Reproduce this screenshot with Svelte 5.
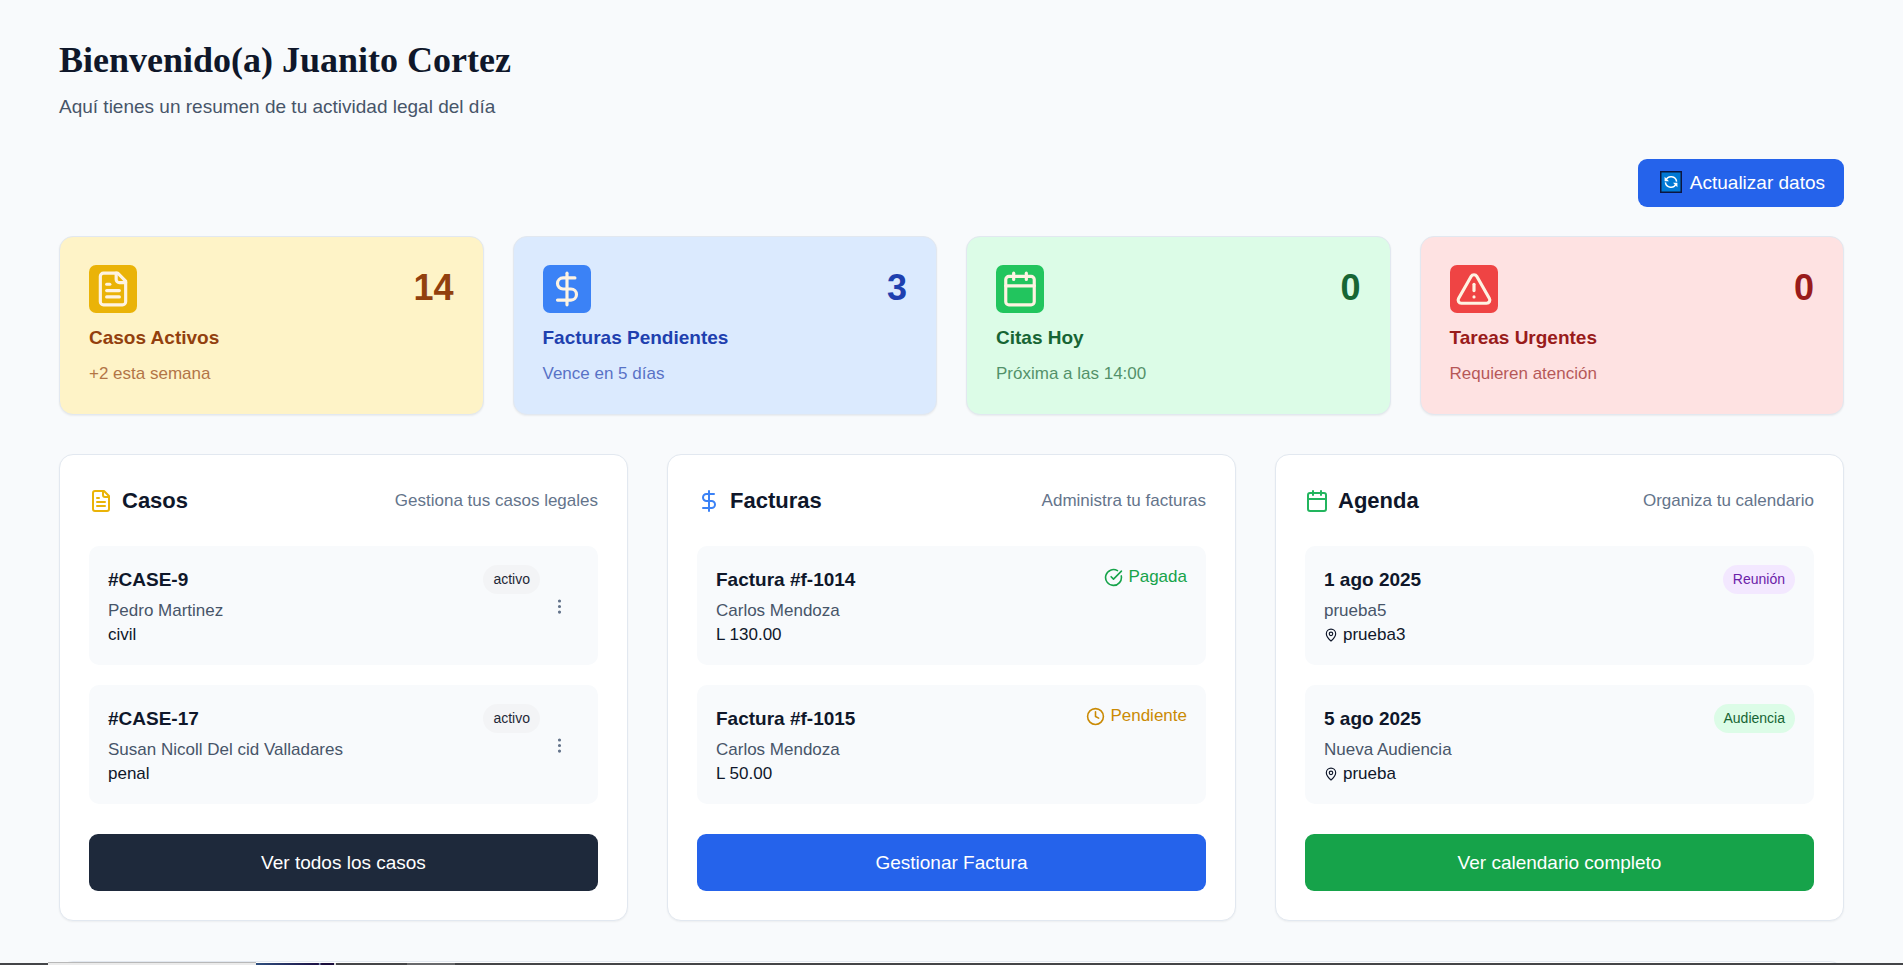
<script>
  const stats = [
    { tone: 'amber', icon: 'file', value: 14, title: 'Casos Activos', note: '+2 esta semana' },
    { tone: 'blue', icon: 'dollar', value: 3, title: 'Facturas Pendientes', note: 'Vence en 5 días' },
    { tone: 'green', icon: 'calendar', value: 0, title: 'Citas Hoy', note: 'Próxima a las 14:00' },
    { tone: 'red', icon: 'alert', value: 0, title: 'Tareas Urgentes', note: 'Requieren atención' }
  ];

  const panels = [
    {
      icon: 'file', tone: 'amber', title: 'Casos', hint: 'Gestiona tus casos legales',
      action: 'Ver todos los casos', button: 'dark',
      items: [
        { title: '#CASE-9', sub: 'Pedro Martinez', detail: 'civil', badge: 'activo', badgeTone: 'gray', menu: true },
        { title: '#CASE-17', sub: 'Susan Nicoll Del cid Valladares', detail: 'penal', badge: 'activo', badgeTone: 'gray', menu: true }
      ]
    },
    {
      icon: 'dollar', tone: 'blue', title: 'Facturas', hint: 'Administra tu facturas',
      action: 'Gestionar Factura', button: 'primary',
      items: [
        { title: 'Factura #f-1014', sub: 'Carlos Mendoza', detail: 'L 130.00', status: 'Pagada', statusIcon: 'check', statusTone: 'paid' },
        { title: 'Factura #f-1015', sub: 'Carlos Mendoza', detail: 'L 50.00', status: 'Pendiente', statusIcon: 'clock', statusTone: 'pending' }
      ]
    },
    {
      icon: 'calendar', tone: 'green', title: 'Agenda', hint: 'Organiza tu calendario',
      action: 'Ver calendario completo', button: 'success',
      items: [
        { title: '1 ago 2025', sub: 'prueba5', detail: 'prueba3', pin: true, badge: 'Reunión', badgeTone: 'purple' },
        { title: '5 ago 2025', sub: 'Nueva Audiencia', detail: 'prueba', pin: true, badge: 'Audiencia', badgeTone: 'mint' }
      ]
    }
  ];
</script>

{#snippet icon(name, size)}
  <svg width={size} height={size} viewBox="0 0 24 24" fill="none" stroke="currentColor" stroke-width="2" stroke-linecap="round" stroke-linejoin="round" aria-hidden="true">
    {#if name === 'file'}
      <path d="M15 2H6a2 2 0 0 0-2 2v16a2 2 0 0 0 2 2h12a2 2 0 0 0 2-2V7Z" />
      <path d="M14 2v4a2 2 0 0 0 2 2h4" />
      <path d="M10 9H8" /><path d="M16 13H8" /><path d="M16 17H8" />
    {:else if name === 'dollar'}
      <path d="M12 2v20" />
      <path d="M17 5H9.5a3.5 3.5 0 0 0 0 7h5a3.5 3.5 0 0 1 0 7H6" />
    {:else if name === 'calendar'}
      <path d="M8 2v4" /><path d="M16 2v4" />
      <rect width="18" height="18" x="3" y="4" rx="2" />
      <path d="M3 10h18" />
    {:else if name === 'alert'}
      <path d="m21.73 18-8-14a2 2 0 0 0-3.48 0l-8 14A2 2 0 0 0 4 21h16a2 2 0 0 0 1.73-3" />
      <path d="M12 9v4" /><path d="M12 17h.01" />
    {:else if name === 'check'}
      <path d="M21.801 10A10 10 0 1 1 17 3.335" />
      <path d="m9 11 3 3L22 4" />
    {:else if name === 'clock'}
      <circle cx="12" cy="12" r="10" />
      <path d="M12 6v6l4 2" />
    {:else if name === 'pin'}
      <path d="M20 10c0 4.993-5.539 10.193-7.399 11.799a1 1 0 0 1-1.202 0C9.539 20.193 4 14.993 4 10a8 8 0 0 1 16 0" />
      <circle cx="12" cy="10" r="3" />
    {:else if name === 'dots'}
      <circle cx="12" cy="12" r="1" /><circle cx="12" cy="5" r="1" /><circle cx="12" cy="19" r="1" />
    {/if}
  </svg>
{/snippet}

<main class="page">
  <header class="intro">
    <h1>Bienvenido(a) Juanito Cortez</h1>
    <p>Aquí tienes un resumen de tu actividad legal del día</p>
  </header>

  <div class="toolbar">
    <button class="refresh" type="button">
      <svg width="22" height="22" viewBox="0 0 22 22" fill="none" aria-hidden="true">
        <rect x="0.75" y="0.75" width="20.5" height="20.5" fill="#0078d4" stroke="#0b1640" stroke-width="1.5" />
        <path d="M5.9 9.2A5.6 5.6 0 0 1 16.6 10.6M16.1 12.8A5.6 5.6 0 0 1 5.4 11.4" stroke="#fff" stroke-width="1.5" />
        <path d="M4.6 5.8v4.4h4.4zM17.4 16.2v-4.4h-4.4z" fill="#fff" />
      </svg>
      Actualizar datos
    </button>
  </div>

  <section class="stats" aria-label="Resumen">
    {#each stats as s}
      <article class="stat {s.tone}">
        <div class="stat-top">
          <span class="stat-icon">{@render icon(s.icon, 38)}</span>
          <strong>{s.value}</strong>
        </div>
        <h2>{s.title}</h2>
        <p>{s.note}</p>
      </article>
    {/each}
  </section>

  <section class="panels">
    {#each panels as p}
      <article class="panel">
        <div class="panel-head">
          <span class="panel-icon {p.tone}">{@render icon(p.icon, 24)}</span>
          <h2>{p.title}</h2>
          <span class="hint">{p.hint}</span>
        </div>
        <ul>
          {#each p.items as item}
            <li>
              <div class="info">
                <h3>{item.title}</h3>
                <p class="sub">{item.sub}</p>
                <p class="detail">
                  {#if item.pin}{@render icon('pin', 14)}{/if}
                  {item.detail}
                </p>
              </div>
              {#if item.badge}<span class="badge {item.badgeTone}">{item.badge}</span>{/if}
              {#if item.status}
                <span class="status {item.statusTone}">{@render icon(item.statusIcon, 19)}{item.status}</span>
              {/if}
              {#if item.menu}
                <button class="more" type="button" aria-label="Opciones">{@render icon('dots', 19)}</button>
              {/if}
            </li>
          {/each}
        </ul>
        <button class="action {p.button}" type="button">{p.action}</button>
      </article>
    {/each}
  </section>

  <section class="panel next"></section>
</main>

<div class="strip" aria-hidden="true">
  <i class="search"></i><i class="art"></i><i class="app"></i>
</div>

<style>
  :global(body) {
    margin: 0;
    background: #f8fafc;
  }
  h1, h2, h3, p, ul {
    margin: 0;
    padding: 0;
  }
  svg {
    display: block;
    flex: none;
  }
  button {
    border: 0;
    font: inherit;
    cursor: pointer;
  }
  .page {
    box-sizing: border-box;
    height: 100vh;
    overflow: hidden;
    padding: 39px 59px 0;
    font-family: "Liberation Sans", Arial, sans-serif;
    font-size: 19px;
    line-height: 29px;
    color: #0f172a;
  }
  .intro h1 {
    font: 700 36px/43px "Liberation Serif", "Times New Roman", serif;
  }
  .intro p {
    margin-top: 10px;
    color: #475569;
  }
  .toolbar {
    display: flex;
    justify-content: flex-end;
    margin: 38px 0 29px;
  }
  .refresh {
    display: flex;
    align-items: center;
    gap: 8px;
    height: 48px;
    padding: 0 19px 2px 22px;
    border-radius: 9px;
    background: #2563eb;
    color: #fff;
  }
  .stats {
    display: grid;
    grid-template-columns: repeat(4, 1fr);
    gap: 29px;
  }
  .stat {
    padding: 28px 29px 26px;
    border: 1px solid #e2e8f0;
    border-radius: 14px;
    box-shadow: 0 1px 2px rgba(0, 0, 0, 0.06);
  }
  .stat-top {
    display: flex;
    justify-content: space-between;
    margin-bottom: 10px;
  }
  .stat-top strong {
    font-size: 36px;
    line-height: 45px;
  }
  .stat-icon {
    padding: 5px;
    border-radius: 7px;
    color: #fef3e2;
  }
  .stat h2 {
    font-size: 19px;
    line-height: 29px;
  }
  .stat p {
    margin-top: 7px;
    font-size: 17px;
    opacity: 0.7;
  }
  .stat.amber { background: #fef3c7; color: #92400e; }
  .stat.blue { background: #dbeafe; color: #1e40af; }
  .stat.green { background: #dcfce7; color: #166534; }
  .stat.red { background: #fee2e2; color: #991b1b; }
  .amber .stat-icon { background: #eab308; }
  .blue .stat-icon { background: #3b82f6; }
  .green .stat-icon { background: #22c55e; }
  .red .stat-icon { background: #ef4444; }

  .panels {
    display: grid;
    grid-template-columns: repeat(3, 1fr);
    gap: 39px;
    margin: 39px 0 40px;
  }
  .panel {
    padding: 29px;
    border: 1px solid #e2e8f0;
    border-radius: 14px;
    background: #fff;
    box-shadow: 0 1px 2px rgba(0, 0, 0, 0.05);
  }
  .next {
    min-height: 200px;
  }
  .panel-head {
    display: flex;
    align-items: center;
    gap: 9px;
    height: 33px;
    margin-bottom: 29px;
  }
  .panel-head h2 {
    flex: 1;
    font-size: 22px;
  }
  .panel-icon.amber { color: #eab308; }
  .panel-icon.blue { color: #3b82f6; }
  .panel-icon.green { color: #22b55e; }
  .hint {
    font-size: 17px;
    color: #64748b;
  }
  ul {
    display: grid;
    gap: 20px;
    margin-bottom: 30px;
    list-style: none;
  }
  li {
    display: flex;
    align-items: flex-start;
    padding: 19px 19px 18px;
    border-radius: 10px;
    background: #f8fafc;
  }
  .info {
    flex: 1;
  }
  .info h3 {
    font-size: 19px;
    line-height: 29px;
    margin-bottom: 5px;
  }
  .info p {
    font-size: 17px;
    line-height: 24px;
  }
  .info .sub {
    color: #475569;
  }
  .info .detail {
    display: flex;
    align-items: center;
    gap: 5px;
  }
  .badge {
    padding: 0 10px;
    border-radius: 15px;
    font-size: 14px;
    line-height: 29px;
  }
  .badge.gray { background: #f3f4f6; color: #1f2937; }
  .badge.purple { background: #f3e8ff; color: #6b21a8; }
  .badge.mint { background: #dcfce7; color: #166534; }
  .status {
    display: flex;
    align-items: center;
    gap: 5px;
    font-size: 17px;
    line-height: 24px;
  }
  .paid { color: #16a34a; }
  .pending { color: #ca8a04; }
  .more {
    align-self: center;
    padding: 10px;
    background: none;
    color: #64748b;
  }
  .action {
    display: block;
    width: 100%;
    height: 57px;
    border-radius: 9px;
    color: #fff;
  }
  .action.dark { background: #1e293b; }
  .action.primary { background: #2563eb; }
  .action.success { background: #16a34a; }

  .strip {
    position: fixed;
    inset: auto 0 0;
    display: flex;
    height: 2px;
    padding-left: 48px;
    background: #444548;
  }
  .search {
    width: 208px;
    background: #ebebeb;
    box-shadow: 0 -1px #b8b8b8;
  }
  .art {
    width: 80px;
    background: linear-gradient(90deg, #2f4f7f, #1c1145 78%, #8ea5c4 79%, #1a0d3c 82%, #1a0d3c 97%, #d8d8d8 98%);
  }
  .app {
    width: 48px;
    margin-left: 71px;
    background: #68696c;
  }
</style>
